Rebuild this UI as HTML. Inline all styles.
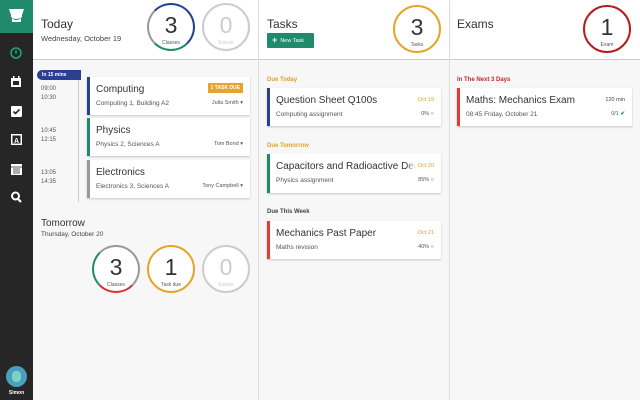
<!DOCTYPE html>
<html><head><meta charset="utf-8"><style>
*{box-sizing:border-box;margin:0;padding:0}
body{width:640px;height:400px;overflow:hidden;background:#f7f7f7;font-family:"Liberation Sans",sans-serif;color:#333;position:relative}
.a{position:absolute}
.side{left:0;top:0;width:33px;height:400px;background:#262626}
.logo{left:0;top:0;width:33px;height:33px;background:#1f8a6c}
.hdr{top:0;height:60px;background:#fff;border-bottom:1px solid #ccc}
.h1{font-size:12px;color:#333}
.sub{font-size:7.5px;color:#444}
.ring{border-radius:50%;border:2px solid #ccc;text-align:center;background:#fff}
.ring b{display:block;font-weight:normal;font-size:23px;line-height:22px;margin-top:9px;color:#333}
.ring i{display:block;font-style:normal;font-size:5px;color:#555;margin-top:4px}
.card{background:#fff;box-shadow:0 1px 2px rgba(0,0,0,.2);border-left:3px solid #2a3f8f;overflow:hidden}
.ct{font-size:10px;color:#333;position:absolute;left:6px;top:7px;white-space:nowrap}
.cs{font-size:6.5px;color:#555;position:absolute;left:6px;top:23px}
.cr{font-size:5.5px;color:#555;position:absolute;right:7px;top:23px}
.cd{font-size:5.5px;color:#e0a030;position:absolute;right:7px;top:9px;background:#fff;padding-left:2px}
.lbl{font-size:6px;font-weight:bold}
.t{font-size:6px;color:#555;line-height:9px}
</style></head><body>
<div class="a side"></div>
<div class="a logo"><svg width="33" height="33"><path d="M9 9h15l-2 6v2q-6 4-11 0v-2z" fill="#fff"/><path d="M12 18q4 4 9 0v4h-9z" fill="#fff"/></svg></div>
<svg class="a" style="left:0;top:40px" width="33" height="170">
<circle cx="16" cy="13" r="5" fill="none" stroke="#1fa37e" stroke-width="1.6"/><path d="M16 10v4" stroke="#1fa37e" stroke-width="1.4"/>
<rect x="11" y="38" width="10" height="9" fill="#fff"/><rect x="13" y="36" width="1.5" height="3" fill="#fff"/><rect x="18" y="36" width="1.5" height="3" fill="#fff"/><rect x="13" y="41" width="6" height="4" fill="#262626"/>
<rect x="11" y="66" width="11" height="11" rx="1" fill="#fff"/><path d="M13.5 71.5l2 2 4-4" stroke="#262626" stroke-width="1.6" fill="none"/>
<rect x="11" y="94" width="11" height="11" fill="#fff"/><rect x="12.5" y="95.5" width="8" height="8" fill="#262626"/><text x="14" y="103" font-size="7" fill="#fff" font-family="Liberation Sans" font-weight="bold">A</text>
<rect x="11" y="124" width="11" height="11" fill="#fff"/><path d="M11 127h11M13 129h7M13 131h7M13 133h7" stroke="#262626" stroke-width=".8"/>
<circle cx="15.5" cy="156" r="3.5" fill="none" stroke="#fff" stroke-width="2"/><path d="M18 159l3 3" stroke="#fff" stroke-width="2.2"/>
</svg>
<div class="a" style="left:6px;top:366px;width:21px;height:21px;border-radius:50%;background:#4a9ec0"><div class="a" style="left:6px;top:5px;width:9px;height:11px;border-radius:4px;background:#7bd3c3"></div></div>
<div class="a" style="left:0;top:390px;width:33px;text-align:center;font-size:5px;color:#fff;font-weight:bold">Simon</div>

<div class="a hdr" style="left:33px;width:607px"></div>
<div class="a" style="left:258px;top:0;width:1px;height:400px;background:#ddd"></div>
<div class="a" style="left:449px;top:0;width:1px;height:400px;background:#ddd"></div>

<div class="a h1" style="left:41px;top:17px">Today</div>
<div class="a sub" style="left:41px;top:34px">Wednesday, October 19</div>
<div class="a ring" style="left:147px;top:3px;width:48px;height:48px;border-color:#1f3f8f #1f3f8f #1f8a6c #999"><b>3</b><i>Classes</i></div>
<div class="a ring" style="left:202px;top:3px;width:48px;height:48px"><b style="color:#ccc">0</b><i style="color:#ccc">Events</i></div>

<div class="a h1" style="left:267px;top:17px">Tasks</div>
<div class="a" style="left:267px;top:33px;width:47px;height:15px;background:#1f8a6c;color:#fff;font-size:5.5px;line-height:15px;padding-left:5px;border-radius:1px"><span style="font-size:9px;font-weight:bold;vertical-align:-1px">+</span>&nbsp; New Task</div>
<div class="a ring" style="left:393px;top:5px;width:48px;height:48px;border-color:#e6a52a"><b>3</b><i>Tasks</i></div>

<div class="a h1" style="left:457px;top:17px">Exams</div>
<div class="a ring" style="left:583px;top:5px;width:48px;height:48px;border-color:#b71c1c"><b>1</b><i>Exam</i></div>

<div class="a" style="left:78px;top:72px;width:1px;height:130px;background:#ccc"></div>
<div class="a" style="left:37px;top:70px;width:44px;height:10px;background:#2a3f8f;color:#fff;font-size:5px;line-height:10px;padding-left:5px;border-radius:5px 0 0 5px;font-weight:bold">In 15 mins</div>
<div class="a t" style="left:41px;top:85px">09:00<br>10:30</div>
<div class="a t" style="left:41px;top:127px">10:45<br>12:15</div>
<div class="a t" style="left:41px;top:169px">13:05<br>14:35</div>

<div class="a card" style="left:87px;top:77px;width:163px;height:38px"><div class="ct">Computing</div><div class="cs">Computing 1, Building A2</div><div class="cr">Julia Smith ▾</div><div class="a" style="right:7px;top:6px;background:#e6a52a;color:#fff;font-size:5px;padding:2px 3px;font-weight:bold">1 TASK DUE</div></div>
<div class="a card" style="left:87px;top:118px;width:163px;height:38px;border-left-color:#1f8a6c"><div class="ct">Physics</div><div class="cs">Physics 2, Sciences A</div><div class="cr">Tom Bond ▾</div></div>
<div class="a card" style="left:87px;top:160px;width:163px;height:38px;border-left-color:#999"><div class="ct">Electronics</div><div class="cs">Electronics 3, Sciences A</div><div class="cr">Tony Campbell ▾</div></div>

<div class="a h1" style="left:41px;top:218px;font-size:10px">Tomorrow</div>
<div class="a sub" style="left:41px;top:231px;font-size:6.5px">Thursday, October 20</div>
<div class="a ring" style="left:92px;top:245px;width:48px;height:48px;border-color:#999 #999 #d33 #1f8a6c"><b>3</b><i>Classes</i></div>
<div class="a ring" style="left:147px;top:245px;width:48px;height:48px;border-color:#e6a52a"><b>1</b><i>Task due</i></div>
<div class="a ring" style="left:202px;top:245px;width:48px;height:48px"><b style="color:#ccc">0</b><i style="color:#ccc">Exams</i></div>

<div class="a lbl" style="left:267px;top:77px;color:#e0a030">Due Today</div>
<div class="a card" style="left:267px;top:88px;width:174px;height:38px"><div class="ct">Question Sheet Q100s</div><div class="cs">Computing assignment</div><div class="cd">Oct 19</div><div class="cr">0% ○</div></div>
<div class="a lbl" style="left:267px;top:143px;color:#e0a030">Due Tomorrow</div>
<div class="a card" style="left:267px;top:154px;width:174px;height:39px;border-left-color:#1f8a6c"><div class="ct">Capacitors and Radioactive Decay</div><div class="cs">Physics assignment</div><div class="a" style="right:0;top:3px;width:35px;height:18px;background:linear-gradient(to right,rgba(255,255,255,0),#fff 30%)"></div><div class="cd">Oct 20</div><div class="cr">85% ○</div></div>
<div class="a lbl" style="left:267px;top:209px;color:#444">Due This Week</div>
<div class="a card" style="left:267px;top:221px;width:174px;height:38px;border-left-color:#e53935"><div class="ct">Mechanics Past Paper</div><div class="cs">Maths revision</div><div class="cd">Oct 21</div><div class="cr">40% ○</div></div>

<div class="a lbl" style="left:457px;top:77px;color:#c62828">In The Next 3 Days</div>
<div class="a card" style="left:457px;top:88px;width:175px;height:38px;border-left-color:#e53935"><div class="ct">Maths: Mechanics Exam</div><div class="cs">08:45 Friday, October 21</div><div class="cd" style="color:#444">120 min</div><div class="cr">0/1 <span style="color:#1f8a6c;font-weight:bold">✔</span></div></div>
</body></html>
